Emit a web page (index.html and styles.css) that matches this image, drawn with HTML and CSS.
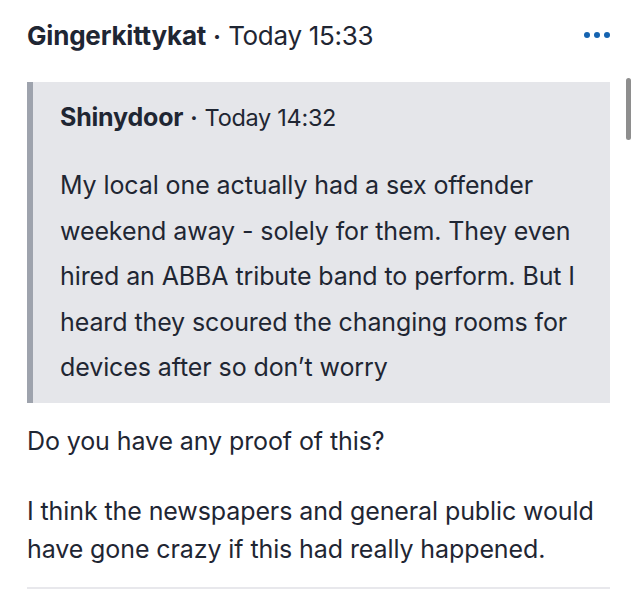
FILE: index.html
```html
<!DOCTYPE html>
<html>
<head>
<meta charset="utf-8">
<link rel="stylesheet" href="styles.css">
</head>
<body>
<div class="post">
  <div class="post-head">
    <div class="meta"><span class="author">Gingerkittykat</span><span class="sep">·</span><span class="time">Today 15:33</span></div>
    <div class="more" aria-label="More"><span></span><span></span><span></span></div>
  </div>
  <blockquote class="quote">
    <div class="meta quote-meta"><span class="author">Shinydoor</span><span class="sep">·</span><span class="time">Today 14:32</span></div>
    <p class="quote-text">My local one actually had a sex offender weekend away - solely for them. They even hired an ABBA tribute band to perform. But I heard they scoured the changing rooms for devices after so don’t worry</p>
  </blockquote>
  <p class="para first">Do you have any proof of this?</p>
  <p class="para">I think the newspapers and general public would have gone crazy if this had really happened.</p>
  <hr class="divider">
</div>
<div class="scrollbar"></div>
</body>
</html>
```

FILE: styles.css
```css
html, body {
  margin: 0;
  padding: 0;
  background: #ffffff;
}
body {
  font-family: Inter, "Noto Sans", sans-serif;
  color: #1f2633;
}
.post {
  padding: 16px 26px 0 27px;
}
.post-head {
  display: flex;
  justify-content: space-between;
  align-items: center;
  height: 38px;
}
.meta {
  display: flex;
  align-items: baseline;
  white-space: nowrap;
}
.author {
  font-weight: 700;
  font-size: 26px;
  letter-spacing: -0.2px;
}
.sep {
  font-size: 24px;
  font-weight: 700;
  margin: 0 7px;
}
.time {
  font-size: 26px;
  font-weight: 400;
  letter-spacing: -0.3px;
}
.more {
  display: flex;
  gap: 4px;
}
.more span {
  width: 6px;
  height: 6px;
  border-radius: 50%;
  background: #1463b0;
}
.quote {
  margin: 28px 0 0 0;
  background: #e5e6ea;
  border-left: 6px solid #9ea3ad;
  padding: 20px 20px 12px 27px;
}
.quote-meta .author {
  font-size: 25px;
}
.quote-meta .sep {
  font-size: 22px;
  margin: 0 7px;
}
.quote-meta .time {
  font-size: 23.5px;
}
.quote-text {
  margin: 31px 0 0 0;
  font-size: 25px;
  line-height: 45.5px;
  letter-spacing: -0.1px;
}
.para {
  margin: 0;
  font-size: 25px;
  line-height: 38px;
  letter-spacing: -0.1px;
}
.para.first {
  margin-top: 19px;
  margin-bottom: 32px;
}
.divider {
  border: none;
  height: 2px;
  background: #e8e8ec;
  margin: 19px 0 0 0;
}
.scrollbar {
  position: fixed;
  right: 5px;
  top: 78px;
  width: 5px;
  height: 62px;
  border-radius: 3px;
  background: #8e8e8e;
}
```
